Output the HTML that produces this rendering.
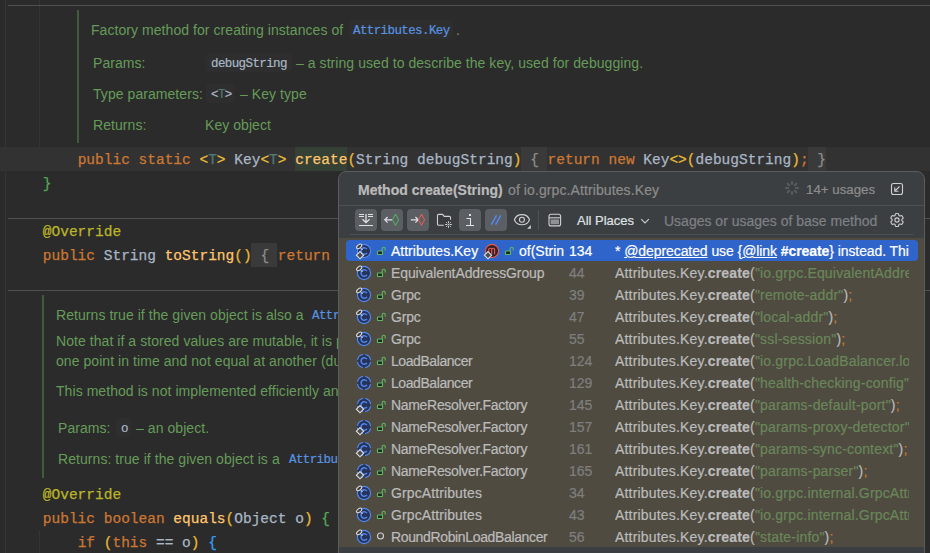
<!DOCTYPE html>
<html><head><meta charset="utf-8">
<style>
*{margin:0;padding:0;box-sizing:border-box}
html,body{width:930px;height:553px;overflow:hidden;background:#2b2b2b}
body{position:relative;font-family:"Liberation Sans",sans-serif}
.a{position:absolute}
.code{position:absolute;left:8px;margin-top:1px;height:24px;line-height:24px;font-family:"Liberation Mono",monospace;font-size:14.5px;white-space:pre;color:#a9b7c6;-webkit-text-stroke:0.25px currentColor}
.kw{color:#cc7832}.fn{color:#ffc66d}.tp{color:#507874}.an{color:#bbb529}
.ry{color:#e8ba36}.rg{color:#54a857}.rb{color:#359ff4}.gr{color:#8c8c8c}
.doc{position:absolute;margin-top:0.5px;font-size:14px;color:#669b59;white-space:pre;line-height:20px;height:20px;letter-spacing:0.06px}
.chip{position:relative;top:-1px;font-family:"Liberation Mono",monospace;font-size:12.5px;letter-spacing:-0.6px;color:#a9b7c6;-webkit-text-stroke:0.2px currentColor}
.chipbg{position:absolute;background:#2e2e2e;border-radius:3px}
.lnk{color:#5893e2}
.hl{position:absolute;background:#2f2f2f}
.pt{position:absolute;font-size:14px;line-height:20px;height:20px;white-space:pre;-webkit-text-stroke:0.2px currentColor}
.clipu{width:294px;overflow:hidden}
</style></head><body>
<!-- indent guides -->
<div class="a" style="left:5px;top:0;width:1px;height:553px;background:#353535"></div>
<div class="a" style="left:39px;top:0;width:1px;height:171px;background:#353535"></div>
<div class="a" style="left:39px;top:530px;width:1px;height:23px;background:#353535"></div>
<!-- separators -->
<div class="a" style="left:8px;top:5px;width:922px;height:1px;background:#4f4f4f"></div>
<div class="a" style="left:8px;top:218px;width:922px;height:1px;background:#4f4f4f"></div>
<div class="a" style="left:8px;top:290px;width:922px;height:1px;background:#4f4f4f"></div>

<!-- current line -->
<div class="a" style="left:0;top:147px;width:930px;height:24px;background:#323232"></div>
<div class="a" style="left:295px;top:147px;width:52px;height:24px;background:#344134"></div>
<div class="a" style="left:521px;top:147px;width:26px;height:24px;background:#3a3a3a"></div>
<div class="a" style="left:808px;top:147px;width:18px;height:24px;background:#3a3a3a"></div>
<div class="a" style="left:251px;top:243px;width:26px;height:24px;background:#3a3a3a"></div>

<!-- doc block 1 -->
<div class="a" style="left:77px;top:10px;width:2px;height:133px;background:#415c3d"></div>
<div class="chipbg" style="left:349px;top:20px;width:104px;height:19px"></div>
<div class="doc" style="left:91px;top:19px">Factory method for creating instances of </div>
<div class="doc" style="left:353px;top:19px"><span class="chip lnk">Attributes.Key</span></div>
<div class="doc" style="left:456px;top:19px">.</div>
<div class="doc" style="left:93px;top:52px">Params:</div>
<div class="chipbg" style="left:206px;top:53px;width:86px;height:19px"></div>
<div class="doc" style="left:211px;top:52px"><span class="chip">debugString</span></div>
<div class="doc" style="left:296px;top:52px">– a string used to describe the key, used for debugging.</div>
<div class="doc" style="left:93px;top:83px">Type parameters:</div>
<div class="chipbg" style="left:206px;top:84px;width:29px;height:19px"></div>
<div class="doc" style="left:211px;top:83px"><span class="chip">&lt;<span class="tp">T</span>&gt;</span></div>
<div class="doc" style="left:240px;top:83px">– Key type</div>
<div class="doc" style="left:93px;top:114px">Returns:</div>
<div class="doc" style="left:205px;top:114px">Key object</div>

<!-- code lines -->
<div class="code" style="top:147px">        <span class="kw">public static </span><span class="ry">&lt;</span><span class="tp">T</span><span class="ry">&gt;</span> Key<span class="ry">&lt;</span><span class="tp">T</span><span class="ry">&gt;</span> <span class="fn">create</span><span class="ry">(</span>String debugString<span class="ry">)</span> <span class="gr">{</span> <span class="kw">return new </span>Key<span class="ry">&lt;&gt;(</span>debugString<span class="ry">)</span><span class="kw">;</span> <span class="gr">}</span></div>
<div class="code" style="top:171px">    <span class="rg">}</span></div>
<div class="code" style="top:219px">    <span class="an">@Override</span></div>
<div class="code" style="top:243px">    <span class="kw">public </span>String <span class="fn">toString</span><span class="ry">()</span> <span class="gr">{</span> <span class="kw">return</span></div>

<!-- doc block 2 -->
<div class="a" style="left:42px;top:295px;width:2px;height:183px;background:#415c3d"></div>
<div class="doc" style="left:56px;top:304px">Returns true if the given object is also a </div>
<div class="doc" style="left:312px;top:304px"><span class="chip lnk">Attributes.Key</span></div>
<div class="doc" style="left:56px;top:330px">Note that if a stored values are mutable, it is possible for two objects to be equal at</div>
<div class="doc" style="left:56px;top:350px">one point in time and not equal at another (due to concurrent mutation).</div>
<div class="doc" style="left:56px;top:380px">This method is not implemented efficiently and is only here for testing.</div>
<div class="doc" style="left:58px;top:417px">Params:</div>
<div class="chipbg" style="left:116px;top:418px;width:15px;height:19px"></div>
<div class="doc" style="left:121px;top:417px"><span class="chip">o</span></div>
<div class="doc" style="left:136px;top:417px">– an object.</div>
<div class="doc" style="left:58px;top:448px">Returns: true if the given object is a </div>
<div class="doc" style="left:289px;top:448px"><span class="chip lnk">Attributes.Key</span></div>

<div class="code" style="top:482px">    <span class="an">@Override</span></div>
<div class="code" style="top:506px">    <span class="kw">public boolean </span><span class="fn">equals</span><span class="ry">(</span>Object o<span class="ry">)</span> <span class="rg">{</span></div>
<div class="code" style="top:530px">        <span class="kw">if </span><span class="ry">(</span><span class="kw">this</span> == o<span class="ry">)</span> <span class="rb">{</span></div>

<!-- POPUP -->
<div class="a" style="left:338px;top:171px;width:587px;height:400px;background:#3c3f41;border:1px solid #5a5c5e;border-radius:8px"></div>
<div class="pt" style="left:358px;top:180px;color:#bbbbbb;font-weight:bold">Method create(String)</div>
<div class="pt" style="left:508px;top:180px;color:#8c8c8c;letter-spacing:0.1px">of io.grpc.Attributes.Key</div>
<svg class="a" style="left:784px;top:180px" width="16" height="16" viewBox="0 0 16 16"><line x1="12.00" y1="8.00" x2="14.00" y2="8.00" stroke="#5a5d63" stroke-width="2" stroke-linecap="round"/><line x1="10.83" y1="10.83" x2="12.24" y2="12.24" stroke="#5a5d63" stroke-width="2" stroke-linecap="round"/><line x1="8.00" y1="12.00" x2="8.00" y2="14.00" stroke="#5a5d63" stroke-width="2" stroke-linecap="round"/><line x1="5.17" y1="10.83" x2="3.76" y2="12.24" stroke="#5a5d63" stroke-width="2" stroke-linecap="round"/><line x1="4.00" y1="8.00" x2="2.00" y2="8.00" stroke="#5a5d63" stroke-width="2" stroke-linecap="round"/><line x1="5.17" y1="5.17" x2="3.76" y2="3.76" stroke="#5a5d63" stroke-width="2" stroke-linecap="round"/><line x1="8.00" y1="4.00" x2="8.00" y2="2.00" stroke="#5a5d63" stroke-width="2" stroke-linecap="round"/><line x1="10.83" y1="5.17" x2="12.24" y2="3.76" stroke="#5a5d63" stroke-width="2" stroke-linecap="round"/></svg>
<div class="pt" style="left:806px;top:180px;color:#8c8c8c;font-size:13.3px">14+ usages</div>
<svg class="a" style="left:890px;top:182px" width="14" height="14" viewBox="0 0 14 14"><rect x="1.5" y="1.5" width="11" height="11" rx="2" fill="none" stroke="#ced0d6" stroke-width="1.1"/><path d="M9.5 4.5L4.8 9.2M4.8 5.6V9.2H8.4" fill="none" stroke="#ced0d6" stroke-width="1.1"/></svg>
<div class="a" style="left:339px;top:205px;width:585px;height:1px;background:#4e5154"></div>
<div class="a" style="left:355px;top:209px;width:22px;height:22px;background:#5b5e62;border-radius:4px"></div>
<div class="a" style="left:381px;top:209px;width:22px;height:22px;background:#5b5e62;border-radius:4px"></div>
<div class="a" style="left:407px;top:209px;width:22px;height:22px;background:#5b5e62;border-radius:4px"></div>
<div class="a" style="left:459px;top:209px;width:22px;height:22px;background:#5b5e62;border-radius:4px"></div>
<div class="a" style="left:485px;top:209px;width:22px;height:22px;background:#5b5e62;border-radius:4px"></div>
<svg class="a" style="left:355px;top:209px" width="22" height="22" viewBox="0 0 22 22"><path d="M4 5.5H9M4 7.5H9M13 5.5H18M13 7.5H18M4 16.5H18" stroke="#dfe1e5" stroke-width="1"/><path d="M11 5V13.5M7.5 10.2L11 13.7L14.5 10.2" fill="none" stroke="#dfe1e5" stroke-width="1.3"/></svg>
<svg class="a" style="left:381px;top:209px" width="22" height="22" viewBox="0 0 22 22"><path d="M3.8 10.8H11M6.6 8L3.8 10.8L6.6 13.6" fill="none" stroke="#dfe1e5" stroke-width="1.2"/><path d="M14.5 5.3L17.6 10.8L14.5 16.3L11.4 10.8Z" fill="none" stroke="#55a85f" stroke-width="1.1" stroke-linejoin="round"/></svg>
<svg class="a" style="left:407px;top:209px" width="22" height="22" viewBox="0 0 22 22"><path d="M3.8 10.8H11M8.4 8L11.2 10.8L8.4 13.6" fill="none" stroke="#dfe1e5" stroke-width="1.2"/><path d="M14.5 5.3L17.6 10.8L14.5 16.3L11.4 10.8Z" fill="none" stroke="#db5c5c" stroke-width="1.1" stroke-linejoin="round"/></svg>
<svg class="a" style="left:436px;top:212px" width="18" height="18" viewBox="0 0 18 18"><path d="M7.8 13.3H2.7a1.2 1.2 0 0 1-1.2-1.2V3.6a1.2 1.2 0 0 1 1.2-1.2H6.6L8.2 4.4H13.3a1.2 1.2 0 0 1 1.2 1.2V7.8" fill="#393b3f" stroke="#ced0d6" stroke-width="1.1"/><path d="M12.5 9.2V11.1M12.5 13.9V15.8M9.2 12.5H11.1M13.9 12.5H15.8M10.2 10.2L11.3 11.3M13.7 13.7L14.8 14.8M10.2 14.8L11.3 13.7M13.7 11.3L14.8 10.2" stroke="#ced0d6" stroke-width="1"/><circle cx="12.5" cy="12.5" r="0.8" fill="#ced0d6"/></svg>
<svg class="a" style="left:459px;top:209px" width="22" height="22" viewBox="0 0 22 22"><rect x="10" y="5" width="2" height="2" fill="#dfe1e5"/><path d="M7.5 9.5H11.5V16.5M7 16.5H15" fill="none" stroke="#dfe1e5" stroke-width="1.1"/></svg>
<svg class="a" style="left:485px;top:209px" width="22" height="22" viewBox="0 0 22 22"><path d="M6.3 15.6L11.5 6.4M10.6 15.6L15.8 6.4" stroke="#548af7" stroke-width="1.4"/></svg>
<svg class="a" style="left:513px;top:211px" width="20" height="18" viewBox="0 0 20 18"><path d="M1.4 8.7C2.6 5.3 5.5 3.6 8.95 3.6C12.4 3.6 15.3 5.3 16.5 8.7C15.3 12.1 12.4 13.8 8.95 13.8C5.5 13.8 2.6 12.1 1.4 8.7Z" fill="none" stroke="#ced0d6" stroke-width="1.1"/><circle cx="8.95" cy="8.7" r="2.5" fill="none" stroke="#ced0d6" stroke-width="1.1"/><path d="M17.9 13.9V17.7H14.1Z" fill="#ced0d6"/></svg>
<div class="a" style="left:538px;top:210px;width:1px;height:20px;background:#4e5154"></div>
<svg class="a" style="left:547px;top:212px" width="16" height="16" viewBox="0 0 16 16"><rect x="2" y="2.3" width="11.6" height="11.6" rx="2" fill="none" stroke="#ced0d6" stroke-width="1.1"/><path d="M2 5.8H13.6" stroke="#ced0d6" stroke-width="1.1"/><rect x="3.6" y="7.4" width="8.4" height="4.8" fill="#8e9196"/></svg>
<div class="pt" style="left:577px;top:211px;color:#dfe1e5;font-size:13px">All Places</div>
<svg class="a" style="left:639px;top:215px" width="12" height="12" viewBox="0 0 12 12"><path d="M2.2 4.2L6 8L9.8 4.2" fill="none" stroke="#ced0d6" stroke-width="1.1"/></svg>
<div class="pt" style="left:664px;top:211px;color:#7e8186">Usages or usages of base method</div>
<svg class="a" style="left:889px;top:212px" width="16" height="16" viewBox="0 0 16 16"><path d="M6.54 1.67 A6.5 6.5 0 0 1 9.46 1.67 L9.91 3.49 A4.9 4.9 0 0 1 10.95 4.09 L12.75 3.57 A6.5 6.5 0 0 1 14.22 6.10 L12.86 7.40 A4.9 4.9 0 0 1 12.86 8.60 L14.22 9.90 A6.5 6.5 0 0 1 12.75 12.43 L10.95 11.91 A4.9 4.9 0 0 1 9.91 12.51 L9.46 14.33 A6.5 6.5 0 0 1 6.54 14.33 L6.09 12.51 A4.9 4.9 0 0 1 5.05 11.91 L3.25 12.43 A6.5 6.5 0 0 1 1.78 9.90 L3.14 8.60 A4.9 4.9 0 0 1 3.14 7.40 L1.78 6.10 A6.5 6.5 0 0 1 3.25 3.57 L5.05 4.09 A4.9 4.9 0 0 1 6.09 3.49Z" fill="none" stroke="#ced0d6" stroke-width="1.1" stroke-linejoin="round"/><circle cx="8" cy="8" r="2.1" fill="none" stroke="#ced0d6" stroke-width="1.1"/></svg>
<div class="a" style="left:350px;top:234px;width:563px;height:1px;background:#4e5154"></div>
<div class="a" style="left:339px;top:238px;width:585px;height:309px;background:#4f4b41"></div>
<div class="a" style="left:339px;top:547px;width:585px;height:6px;background:#3c3f41"></div>
<div class="a" style="left:346px;top:240px;width:572px;height:21px;background:#2f65ca;border-radius:4px"></div>
<svg class="a" style="left:354px;top:242px" width="18" height="18" viewBox="0 0 18 18"><circle cx="10" cy="9" r="6.6" fill="#26345a" stroke="#548af7" stroke-width="1.1"/><path d="M12.9 7.2A3.2 3.2 0 1 0 12.9 10.8" fill="none" stroke="#548af7" stroke-width="1.4"/><g transform="rotate(-40 5.2 4.4)"><ellipse cx="5.2" cy="4.4" rx="3" ry="1.7" fill="#3d3d3d" stroke="#dfe1e5" stroke-width="1"/></g><path d="M6.6 6 L8.6 8" stroke="#dfe1e5" stroke-width="1"/><path d="M6 9.6 L9.6 13.2 L6 16.8 L2.4 13.2Z" fill="#4a4d52" stroke="#dfe1e5" stroke-width="1.1"/></svg>
<svg class="a" style="left:376px;top:245px" width="10" height="10" viewBox="0 0 10 10"><path d="M6.2 6V3.8A1.5 1.5 0 0 1 9.2 3.8V5.6" fill="none" stroke="#5fb865" stroke-width="1.1"/><rect x="1.5" y="6" width="5" height="3.6" rx="0.6" fill="#1b2a1c" stroke="#5fb865" stroke-width="1.1"/></svg>
<div class="pt" style="left:391px;top:241px;color:#ffffff;letter-spacing:0.000px">Attributes.Key</div>
<svg class="a" style="left:483px;top:242px" width="18" height="18" viewBox="0 0 18 18"><circle cx="9" cy="9" r="6.6" fill="#3b2222" stroke="#e55b5b" stroke-width="1.1"/><path d="M5.8 12.2V6.4M5.8 7.6Q5.8 6.2 7.3 6.2Q8.7 6.2 8.7 7.6V12.2M8.7 7.6Q8.7 6.2 10.2 6.2Q11.6 6.2 11.6 7.6V12.2" fill="none" stroke="#e55b5b" stroke-width="1.1"/><path d="M5 9.6L8.6 13.2L5 16.8L1.4 13.2Z" fill="#4a4d52" stroke="#dfe1e5" stroke-width="1.1"/></svg>
<svg class="a" style="left:504px;top:245px" width="10" height="10" viewBox="0 0 10 10"><path d="M6.2 6V3.8A1.5 1.5 0 0 1 9.2 3.8V5.6" fill="none" stroke="#5fb865" stroke-width="1.1"/><rect x="1.5" y="6" width="5" height="3.6" rx="0.6" fill="#1b2a1c" stroke="#5fb865" stroke-width="1.1"/></svg>
<div class="pt" style="left:519px;top:241px;color:#ffffff">of(Strin</div>
<div class="pt" style="left:569px;top:241px;color:#ffffff">134</div>
<div class="pt clipu" style="left:615px;top:241px;color:#ffffff;letter-spacing:-0.08px">* <u>@deprecated</u> use {<u>@link</u> <b>#create</b>} instead. This method is deprecated</div>
<svg class="a" style="left:354px;top:264px" width="18" height="18" viewBox="0 0 18 18"><circle cx="10" cy="9" r="6.6" fill="#26345a" stroke="#548af7" stroke-width="1.1"/><path d="M12.9 7.2A3.2 3.2 0 1 0 12.9 10.8" fill="none" stroke="#548af7" stroke-width="1.4"/><g transform="rotate(-40 5.2 4.4)"><ellipse cx="5.2" cy="4.4" rx="3" ry="1.7" fill="#3d3d3d" stroke="#dfe1e5" stroke-width="1"/></g><path d="M6.6 6 L8.6 8" stroke="#dfe1e5" stroke-width="1"/></svg>
<svg class="a" style="left:376px;top:267px" width="10" height="10" viewBox="0 0 10 10"><path d="M6.2 6V3.8A1.5 1.5 0 0 1 9.2 3.8V5.6" fill="none" stroke="#5fb865" stroke-width="1.1"/><rect x="1.5" y="6" width="5" height="3.6" rx="0.6" fill="#1b2a1c" stroke="#5fb865" stroke-width="1.1"/></svg>
<div class="pt" style="left:391px;top:263px;color:#bbbbbb;letter-spacing:-0.098px">EquivalentAddressGroup</div>
<div class="pt" style="left:569px;top:263px;color:#7f7f7f">44</div>
<div class="pt clipu" style="left:615px;top:263px;color:#bbbbbb;letter-spacing:0.18px">Attributes.Key.<b>create</b>(<span style="color:#6a8759">"io.grpc.EquivalentAddressGroup.secureness"</span></div>
<svg class="a" style="left:354px;top:286px" width="18" height="18" viewBox="0 0 18 18"><circle cx="10" cy="9" r="6.6" fill="#26345a" stroke="#548af7" stroke-width="1.1"/><path d="M12.9 7.2A3.2 3.2 0 1 0 12.9 10.8" fill="none" stroke="#548af7" stroke-width="1.4"/><g transform="rotate(-40 5.2 4.4)"><ellipse cx="5.2" cy="4.4" rx="3" ry="1.7" fill="#3d3d3d" stroke="#dfe1e5" stroke-width="1"/></g><path d="M6.6 6 L8.6 8" stroke="#dfe1e5" stroke-width="1"/></svg>
<svg class="a" style="left:376px;top:289px" width="10" height="10" viewBox="0 0 10 10"><path d="M6.2 6V3.8A1.5 1.5 0 0 1 9.2 3.8V5.6" fill="none" stroke="#5fb865" stroke-width="1.1"/><rect x="1.5" y="6" width="5" height="3.6" rx="0.6" fill="#1b2a1c" stroke="#5fb865" stroke-width="1.1"/></svg>
<div class="pt" style="left:391px;top:285px;color:#bbbbbb;letter-spacing:-0.185px">Grpc</div>
<div class="pt" style="left:569px;top:285px;color:#7f7f7f">39</div>
<div class="pt clipu" style="left:615px;top:285px;color:#bbbbbb;letter-spacing:0.18px">Attributes.Key.<b>create</b>(<span style="color:#6a8759">"remote-addr"</span>)<span style="color:#cc7832">;</span></div>
<svg class="a" style="left:354px;top:308px" width="18" height="18" viewBox="0 0 18 18"><circle cx="10" cy="9" r="6.6" fill="#26345a" stroke="#548af7" stroke-width="1.1"/><path d="M12.9 7.2A3.2 3.2 0 1 0 12.9 10.8" fill="none" stroke="#548af7" stroke-width="1.4"/><g transform="rotate(-40 5.2 4.4)"><ellipse cx="5.2" cy="4.4" rx="3" ry="1.7" fill="#3d3d3d" stroke="#dfe1e5" stroke-width="1"/></g><path d="M6.6 6 L8.6 8" stroke="#dfe1e5" stroke-width="1"/></svg>
<svg class="a" style="left:376px;top:311px" width="10" height="10" viewBox="0 0 10 10"><path d="M6.2 6V3.8A1.5 1.5 0 0 1 9.2 3.8V5.6" fill="none" stroke="#5fb865" stroke-width="1.1"/><rect x="1.5" y="6" width="5" height="3.6" rx="0.6" fill="#1b2a1c" stroke="#5fb865" stroke-width="1.1"/></svg>
<div class="pt" style="left:391px;top:307px;color:#bbbbbb;letter-spacing:-0.185px">Grpc</div>
<div class="pt" style="left:569px;top:307px;color:#7f7f7f">47</div>
<div class="pt clipu" style="left:615px;top:307px;color:#bbbbbb;letter-spacing:0.18px">Attributes.Key.<b>create</b>(<span style="color:#6a8759">"local-addr"</span>)<span style="color:#cc7832">;</span></div>
<svg class="a" style="left:354px;top:330px" width="18" height="18" viewBox="0 0 18 18"><circle cx="10" cy="9" r="6.6" fill="#26345a" stroke="#548af7" stroke-width="1.1"/><path d="M12.9 7.2A3.2 3.2 0 1 0 12.9 10.8" fill="none" stroke="#548af7" stroke-width="1.4"/><g transform="rotate(-40 5.2 4.4)"><ellipse cx="5.2" cy="4.4" rx="3" ry="1.7" fill="#3d3d3d" stroke="#dfe1e5" stroke-width="1"/></g><path d="M6.6 6 L8.6 8" stroke="#dfe1e5" stroke-width="1"/></svg>
<svg class="a" style="left:376px;top:333px" width="10" height="10" viewBox="0 0 10 10"><path d="M6.2 6V3.8A1.5 1.5 0 0 1 9.2 3.8V5.6" fill="none" stroke="#5fb865" stroke-width="1.1"/><rect x="1.5" y="6" width="5" height="3.6" rx="0.6" fill="#1b2a1c" stroke="#5fb865" stroke-width="1.1"/></svg>
<div class="pt" style="left:391px;top:329px;color:#bbbbbb;letter-spacing:-0.185px">Grpc</div>
<div class="pt" style="left:569px;top:329px;color:#7f7f7f">55</div>
<div class="pt clipu" style="left:615px;top:329px;color:#bbbbbb;letter-spacing:0.18px">Attributes.Key.<b>create</b>(<span style="color:#6a8759">"ssl-session"</span>)<span style="color:#cc7832">;</span></div>
<svg class="a" style="left:354px;top:352px" width="18" height="18" viewBox="0 0 18 18"><circle cx="10" cy="9" r="6.6" fill="#26345a" stroke="#548af7" stroke-width="1.1" stroke-dasharray="8.17 2.2" stroke-dashoffset="9.27"/><path d="M12.9 7.2A3.2 3.2 0 1 0 12.9 10.8" fill="none" stroke="#548af7" stroke-width="1.4"/></svg>
<svg class="a" style="left:376px;top:355px" width="10" height="10" viewBox="0 0 10 10"><path d="M6.2 6V3.8A1.5 1.5 0 0 1 9.2 3.8V5.6" fill="none" stroke="#5fb865" stroke-width="1.1"/><rect x="1.5" y="6" width="5" height="3.6" rx="0.6" fill="#1b2a1c" stroke="#5fb865" stroke-width="1.1"/></svg>
<div class="pt" style="left:391px;top:351px;color:#bbbbbb;letter-spacing:-0.426px">LoadBalancer</div>
<div class="pt" style="left:569px;top:351px;color:#7f7f7f">124</div>
<div class="pt clipu" style="left:615px;top:351px;color:#bbbbbb;letter-spacing:0.18px">Attributes.Key.<b>create</b>(<span style="color:#6a8759">"io.grpc.LoadBalancer.loadBalancingConfig"</span></div>
<svg class="a" style="left:354px;top:374px" width="18" height="18" viewBox="0 0 18 18"><circle cx="10" cy="9" r="6.6" fill="#26345a" stroke="#548af7" stroke-width="1.1" stroke-dasharray="8.17 2.2" stroke-dashoffset="9.27"/><path d="M12.9 7.2A3.2 3.2 0 1 0 12.9 10.8" fill="none" stroke="#548af7" stroke-width="1.4"/></svg>
<svg class="a" style="left:376px;top:377px" width="10" height="10" viewBox="0 0 10 10"><path d="M6.2 6V3.8A1.5 1.5 0 0 1 9.2 3.8V5.6" fill="none" stroke="#5fb865" stroke-width="1.1"/><rect x="1.5" y="6" width="5" height="3.6" rx="0.6" fill="#1b2a1c" stroke="#5fb865" stroke-width="1.1"/></svg>
<div class="pt" style="left:391px;top:373px;color:#bbbbbb;letter-spacing:-0.426px">LoadBalancer</div>
<div class="pt" style="left:569px;top:373px;color:#7f7f7f">129</div>
<div class="pt clipu" style="left:615px;top:373px;color:#bbbbbb;letter-spacing:0.18px">Attributes.Key.<b>create</b>(<span style="color:#6a8759">"health-checking-config"</span>)<span style="color:#cc7832">;</span></div>
<svg class="a" style="left:354px;top:396px" width="18" height="18" viewBox="0 0 18 18"><circle cx="10" cy="9" r="6.6" fill="#26345a" stroke="#548af7" stroke-width="1.1" stroke-dasharray="8.17 2.2" stroke-dashoffset="9.27"/><path d="M12.9 7.2A3.2 3.2 0 1 0 12.9 10.8" fill="none" stroke="#548af7" stroke-width="1.4"/><path d="M6 9.6 L9.6 13.2 L6 16.8 L2.4 13.2Z" fill="#4a4d52" stroke="#dfe1e5" stroke-width="1.1"/></svg>
<svg class="a" style="left:376px;top:399px" width="10" height="10" viewBox="0 0 10 10"><path d="M6.2 6V3.8A1.5 1.5 0 0 1 9.2 3.8V5.6" fill="none" stroke="#5fb865" stroke-width="1.1"/><rect x="1.5" y="6" width="5" height="3.6" rx="0.6" fill="#1b2a1c" stroke="#5fb865" stroke-width="1.1"/></svg>
<div class="pt" style="left:391px;top:395px;color:#bbbbbb;letter-spacing:-0.314px">NameResolver.Factory</div>
<div class="pt" style="left:569px;top:395px;color:#7f7f7f">145</div>
<div class="pt clipu" style="left:615px;top:395px;color:#bbbbbb;letter-spacing:0.18px">Attributes.Key.<b>create</b>(<span style="color:#6a8759">"params-default-port"</span>)<span style="color:#cc7832">;</span></div>
<svg class="a" style="left:354px;top:418px" width="18" height="18" viewBox="0 0 18 18"><circle cx="10" cy="9" r="6.6" fill="#26345a" stroke="#548af7" stroke-width="1.1" stroke-dasharray="8.17 2.2" stroke-dashoffset="9.27"/><path d="M12.9 7.2A3.2 3.2 0 1 0 12.9 10.8" fill="none" stroke="#548af7" stroke-width="1.4"/><path d="M6 9.6 L9.6 13.2 L6 16.8 L2.4 13.2Z" fill="#4a4d52" stroke="#dfe1e5" stroke-width="1.1"/></svg>
<svg class="a" style="left:376px;top:421px" width="10" height="10" viewBox="0 0 10 10"><path d="M6.2 6V3.8A1.5 1.5 0 0 1 9.2 3.8V5.6" fill="none" stroke="#5fb865" stroke-width="1.1"/><rect x="1.5" y="6" width="5" height="3.6" rx="0.6" fill="#1b2a1c" stroke="#5fb865" stroke-width="1.1"/></svg>
<div class="pt" style="left:391px;top:417px;color:#bbbbbb;letter-spacing:-0.314px">NameResolver.Factory</div>
<div class="pt" style="left:569px;top:417px;color:#7f7f7f">157</div>
<div class="pt clipu" style="left:615px;top:417px;color:#bbbbbb;letter-spacing:0.18px">Attributes.Key.<b>create</b>(<span style="color:#6a8759">"params-proxy-detector"</span>)<span style="color:#cc7832">;</span></div>
<svg class="a" style="left:354px;top:440px" width="18" height="18" viewBox="0 0 18 18"><circle cx="10" cy="9" r="6.6" fill="#26345a" stroke="#548af7" stroke-width="1.1" stroke-dasharray="8.17 2.2" stroke-dashoffset="9.27"/><path d="M12.9 7.2A3.2 3.2 0 1 0 12.9 10.8" fill="none" stroke="#548af7" stroke-width="1.4"/><path d="M6 9.6 L9.6 13.2 L6 16.8 L2.4 13.2Z" fill="#4a4d52" stroke="#dfe1e5" stroke-width="1.1"/></svg>
<svg class="a" style="left:376px;top:443px" width="10" height="10" viewBox="0 0 10 10"><path d="M6.2 6V3.8A1.5 1.5 0 0 1 9.2 3.8V5.6" fill="none" stroke="#5fb865" stroke-width="1.1"/><rect x="1.5" y="6" width="5" height="3.6" rx="0.6" fill="#1b2a1c" stroke="#5fb865" stroke-width="1.1"/></svg>
<div class="pt" style="left:391px;top:439px;color:#bbbbbb;letter-spacing:-0.314px">NameResolver.Factory</div>
<div class="pt" style="left:569px;top:439px;color:#7f7f7f">161</div>
<div class="pt clipu" style="left:615px;top:439px;color:#bbbbbb;letter-spacing:0.18px">Attributes.Key.<b>create</b>(<span style="color:#6a8759">"params-sync-context"</span>)<span style="color:#cc7832">;</span></div>
<svg class="a" style="left:354px;top:462px" width="18" height="18" viewBox="0 0 18 18"><circle cx="10" cy="9" r="6.6" fill="#26345a" stroke="#548af7" stroke-width="1.1" stroke-dasharray="8.17 2.2" stroke-dashoffset="9.27"/><path d="M12.9 7.2A3.2 3.2 0 1 0 12.9 10.8" fill="none" stroke="#548af7" stroke-width="1.4"/><path d="M6 9.6 L9.6 13.2 L6 16.8 L2.4 13.2Z" fill="#4a4d52" stroke="#dfe1e5" stroke-width="1.1"/></svg>
<svg class="a" style="left:376px;top:465px" width="10" height="10" viewBox="0 0 10 10"><path d="M6.2 6V3.8A1.5 1.5 0 0 1 9.2 3.8V5.6" fill="none" stroke="#5fb865" stroke-width="1.1"/><rect x="1.5" y="6" width="5" height="3.6" rx="0.6" fill="#1b2a1c" stroke="#5fb865" stroke-width="1.1"/></svg>
<div class="pt" style="left:391px;top:461px;color:#bbbbbb;letter-spacing:-0.314px">NameResolver.Factory</div>
<div class="pt" style="left:569px;top:461px;color:#7f7f7f">165</div>
<div class="pt clipu" style="left:615px;top:461px;color:#bbbbbb;letter-spacing:0.18px">Attributes.Key.<b>create</b>(<span style="color:#6a8759">"params-parser"</span>)<span style="color:#cc7832">;</span></div>
<svg class="a" style="left:354px;top:484px" width="18" height="18" viewBox="0 0 18 18"><circle cx="10" cy="9" r="6.6" fill="#26345a" stroke="#548af7" stroke-width="1.1"/><path d="M12.9 7.2A3.2 3.2 0 1 0 12.9 10.8" fill="none" stroke="#548af7" stroke-width="1.4"/><g transform="rotate(-40 5.2 4.4)"><ellipse cx="5.2" cy="4.4" rx="3" ry="1.7" fill="#3d3d3d" stroke="#dfe1e5" stroke-width="1"/></g><path d="M6.6 6 L8.6 8" stroke="#dfe1e5" stroke-width="1"/></svg>
<svg class="a" style="left:376px;top:487px" width="10" height="10" viewBox="0 0 10 10"><path d="M6.2 6V3.8A1.5 1.5 0 0 1 9.2 3.8V5.6" fill="none" stroke="#5fb865" stroke-width="1.1"/><rect x="1.5" y="6" width="5" height="3.6" rx="0.6" fill="#1b2a1c" stroke="#5fb865" stroke-width="1.1"/></svg>
<div class="pt" style="left:391px;top:483px;color:#bbbbbb;letter-spacing:0.109px">GrpcAttributes</div>
<div class="pt" style="left:569px;top:483px;color:#7f7f7f">34</div>
<div class="pt clipu" style="left:615px;top:483px;color:#bbbbbb;letter-spacing:0.18px">Attributes.Key.<b>create</b>(<span style="color:#6a8759">"io.grpc.internal.GrpcAttributes.securityLevel"</span></div>
<svg class="a" style="left:354px;top:506px" width="18" height="18" viewBox="0 0 18 18"><circle cx="10" cy="9" r="6.6" fill="#26345a" stroke="#548af7" stroke-width="1.1"/><path d="M12.9 7.2A3.2 3.2 0 1 0 12.9 10.8" fill="none" stroke="#548af7" stroke-width="1.4"/><g transform="rotate(-40 5.2 4.4)"><ellipse cx="5.2" cy="4.4" rx="3" ry="1.7" fill="#3d3d3d" stroke="#dfe1e5" stroke-width="1"/></g><path d="M6.6 6 L8.6 8" stroke="#dfe1e5" stroke-width="1"/></svg>
<svg class="a" style="left:376px;top:509px" width="10" height="10" viewBox="0 0 10 10"><path d="M6.2 6V3.8A1.5 1.5 0 0 1 9.2 3.8V5.6" fill="none" stroke="#5fb865" stroke-width="1.1"/><rect x="1.5" y="6" width="5" height="3.6" rx="0.6" fill="#1b2a1c" stroke="#5fb865" stroke-width="1.1"/></svg>
<div class="pt" style="left:391px;top:505px;color:#bbbbbb;letter-spacing:0.109px">GrpcAttributes</div>
<div class="pt" style="left:569px;top:505px;color:#7f7f7f">43</div>
<div class="pt clipu" style="left:615px;top:505px;color:#bbbbbb;letter-spacing:0.18px">Attributes.Key.<b>create</b>(<span style="color:#6a8759">"io.grpc.internal.GrpcAttributes.attrLbAddrs"</span></div>
<svg class="a" style="left:354px;top:528px" width="18" height="18" viewBox="0 0 18 18"><circle cx="10" cy="9" r="6.6" fill="#26345a" stroke="#548af7" stroke-width="1.1"/><path d="M12.9 7.2A3.2 3.2 0 1 0 12.9 10.8" fill="none" stroke="#548af7" stroke-width="1.4"/><g transform="rotate(-40 5.2 4.4)"><ellipse cx="5.2" cy="4.4" rx="3" ry="1.7" fill="#3d3d3d" stroke="#dfe1e5" stroke-width="1"/></g><path d="M6.6 6 L8.6 8" stroke="#dfe1e5" stroke-width="1"/></svg>
<svg class="a" style="left:376px;top:531px" width="10" height="10" viewBox="0 0 10 10"><circle cx="4.5" cy="5" r="3" fill="none" stroke="#ced0d6" stroke-width="1.1"/></svg>
<div class="pt" style="left:391px;top:527px;color:#bbbbbb;letter-spacing:-0.356px">RoundRobinLoadBalancer</div>
<div class="pt" style="left:569px;top:527px;color:#7f7f7f">56</div>
<div class="pt clipu" style="left:615px;top:527px;color:#bbbbbb;letter-spacing:0.18px">Attributes.Key.<b>create</b>(<span style="color:#6a8759">"state-info"</span>)<span style="color:#cc7832">;</span></div>
</body></html>
